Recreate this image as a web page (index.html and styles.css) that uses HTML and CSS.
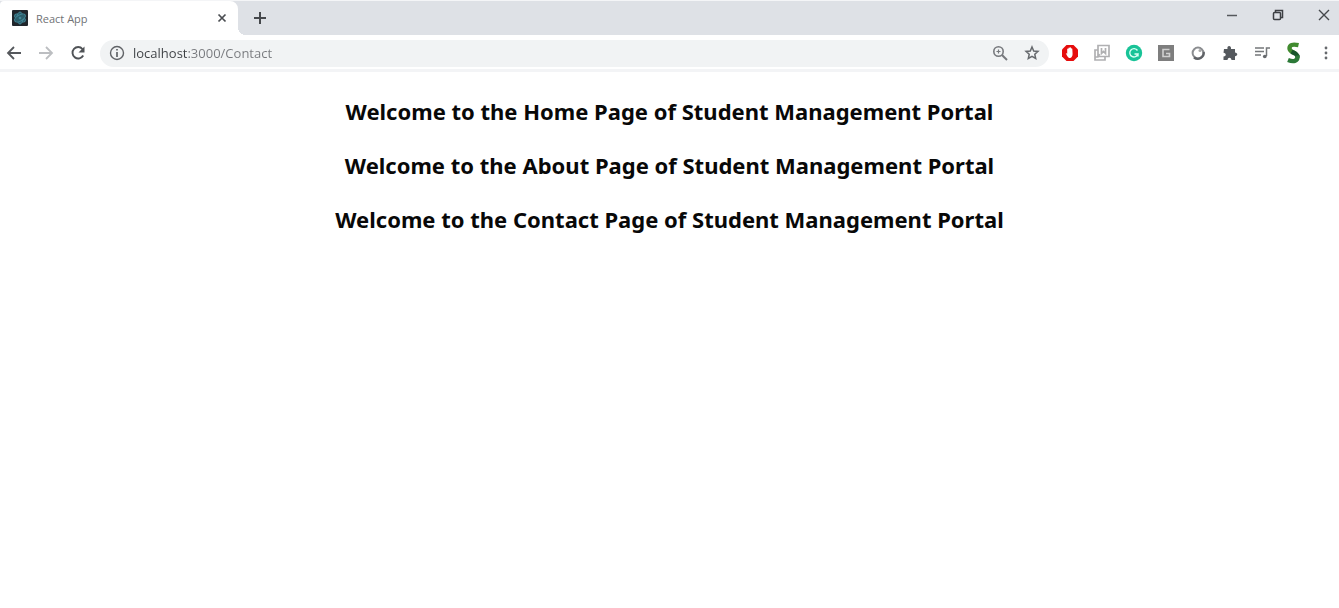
FILE: index.html
```html
<!DOCTYPE html>
<html lang="en">
<head>
<meta charset="utf-8">
<title>React App</title>
<link rel="stylesheet" href="styles.css">
</head>
<body>
<header class="browser">
  <div class="tab-strip">
    <div class="tab">
      <svg class="favicon" width="16" height="16" viewBox="0 0 16 16"><rect width="16" height="16" rx="1" fill="#20262c"/><g fill="#2b5f6c" stroke="#438798" stroke-width="1"><ellipse cx="8" cy="8" rx="6" ry="3" transform="rotate(30 8 8)"/><ellipse cx="8" cy="8" rx="6" ry="3" transform="rotate(90 8 8)"/><ellipse cx="8" cy="8" rx="6" ry="3" transform="rotate(150 8 8)"/></g><circle cx="8" cy="8" r="1.3" fill="#438798"/></svg>
      <span class="tab-title">React App</span>
      <button class="icon-button" aria-label="Close tab"><svg width="16" height="16" viewBox="0 0 16 16" fill="none" stroke="#4a4d51" stroke-width="1.7"><path d="M4.5 4.5l7 7m0-7l-7 7"/></svg></button>
    </div>
    <button class="icon-button new-tab" aria-label="New tab"><svg width="16" height="16" viewBox="0 0 16 16" fill="none" stroke="#45484c" stroke-width="2"><path d="M8 2v12M2 8h12"/></svg></button>
    <div class="window-controls">
      <button class="icon-button" aria-label="Minimize"><svg width="16" height="16" viewBox="0 0 16 16" fill="none" stroke="#55585c" stroke-width="1.5"><path d="M3 8.5h10"/></svg></button>
      <button class="icon-button" aria-label="Restore"><svg width="16" height="16" viewBox="0 0 16 16" fill="none" stroke="#3c3f43" stroke-width="1.5"><rect x="3.5" y="5.5" width="7" height="7" rx="1"/><path d="M5.5 5V3.500h7v7H11"/></svg></button>
      <button class="icon-button" aria-label="Close"><svg width="16" height="16" viewBox="0 0 16 16" fill="none" stroke="#45484c" stroke-width="1.4"><path d="M3 3l10 10m0-10L3 13"/></svg></button>
    </div>
  </div>
  <div class="toolbar">
    <nav class="navigation" aria-label="History">
      <button class="icon-button" aria-label="Back"><svg width="16" height="16" viewBox="0 0 16 16" fill="none" stroke="#55585c" stroke-width="1.8"><path d="M15 8H2M8 2L2 8l6 6"/></svg></button>
      <button class="icon-button" aria-label="Forward" disabled><svg width="16" height="16" viewBox="0 0 16 16" fill="none" stroke="#bcbec1" stroke-width="1.8"><path d="M1 8h13M8 2l6 6-6 6"/></svg></button>
      <button class="icon-button" aria-label="Reload"><svg width="16" height="16" viewBox="0 0 16 16" fill="none" stroke="#505357" stroke-width="1.9"><path d="M13.200 10.500A5.700 5.700 0 1 1 12.500 4"/><path d="M14.500 1.500v6h-6z" fill="#505357" stroke="none"/></svg></button>
    </nav>
    <div class="address-bar">
      <svg width="16" height="16" viewBox="0 0 16 16" fill="none" stroke="#606367" stroke-width="1.4"><circle cx="8" cy="8" r="6.500"/><path d="M8 7v5M8 4v1.600" stroke-width="1.700"/></svg>
      <input class="address" type="text" aria-label="Address" value="localhost:3000/Contact" spellcheck="false">
      <button class="icon-button" aria-label="Zoom"><svg width="16" height="16" viewBox="0 0 16 16" fill="none" stroke="#77797d" stroke-width="1.600"><circle cx="6.500" cy="6.500" r="4.700"/><path d="M10 10l5 5" stroke-width="2"/><path d="M4.500 6.500h4M6.500 4.500v4" stroke-width="1.200"/></svg></button>
      <button class="icon-button" aria-label="Bookmark"><svg width="16" height="16" viewBox="0 0 16 16" fill="none" stroke="#66696d" stroke-width="1.500"><path d="M8 2l1.700 4 4.300.4-3.200 2.900.9 4.200L8 11.300l-3.700 2.200.9-4.200L2 6.400 6.300 6z"/></svg></button>
    </div>
    <div class="extensions">
      <button class="icon-button" aria-label="Ad blocker"><svg width="18" height="18" viewBox="0 0 18 18"><path d="M5.500 1h7L17 5.500v7L12.500 17h-7L1 12.500v-7z" fill="#e60d0d"/><path d="M4.800 9l1.400.8V5q.7-.8 1.200 0V4q.7-.8 1.300 0v-.4q.7-.7 1.300.1v.8q.8-.5 1.300.3l.3 5.200q-.2 3.700-2.700 4H8.200Q6.600 13.600 4.800 9z" fill="#fff"/></svg></button>
      <button class="icon-button" aria-label="Copy capture"><svg width="18" height="18" viewBox="0 0 18 18" fill="none" stroke="#b0b0b2" stroke-width="1.700"><path d="M5 1.500h11v11H5zM5 6H2v10h10v-3M2 13h3l1.500-3M8.500 4v5.500l2-2 2 2V4"/></svg></button>
      <button class="icon-button" aria-label="Writing assistant"><svg width="18" height="18" viewBox="0 0 18 18" fill="none"><circle cx="9" cy="9" r="8.200" fill="#18c397"/><path d="M12.500 6.500A4.200 4.200 0 1 0 13 10H9.500M13 9.500v3" stroke="#d9fff4" stroke-width="1.400"/></svg></button>
      <button class="icon-button" aria-label="G extension"><svg width="18" height="18" viewBox="0 0 18 18" fill="none"><rect x="1" y="1" width="16" height="16" fill="#7e7e7e"/><path d="M12.500 5.500H6v7h6.500V9.500H9" stroke="#d0d0d0" stroke-width="1.600"/></svg></button>
      <button class="icon-button" aria-label="Circle extension"><svg width="18" height="18" viewBox="0 0 18 18" fill="none"><circle cx="9" cy="9" r="5.400" stroke="#8b8d90" stroke-width="2"/><path d="M14.700 8A6 6 0 0 1 5 13.500" stroke="#5f6266" stroke-width="2.300"/><circle cx="11" cy="6.500" r="1.500" fill="#aaa"/></svg></button>
      <button class="icon-button" aria-label="Extensions"><svg width="18" height="18" viewBox="0 0 18 18"><path d="M3 5h3.500C5.500 1 10.700 1 10 5h4v3.500c3 .2 3 3.500 0 3.700V16h-3.500c-.3-3-3.700-3-4 0H2.500v-3.500c3-.2 3-3.500 0-3.800z" fill="#55595e"/></svg></button>
      <button class="icon-button" aria-label="Media controls"><svg width="18" height="18" viewBox="0 0 18 18" fill="none" stroke="#74777a" stroke-width="1.500"><path d="M2 4h9M2 7.500h9M2 11h6M13.500 12V4H17"/><ellipse cx="11.800" cy="12.500" rx="1.900" ry="1.800" fill="#66696d" stroke="none"/></svg></button>
      <button class="icon-button" aria-label="Profile"><svg width="18" height="22" viewBox="0 0 18 22" fill="none" stroke-width="4.400"><path d="M13.500 3.200Q4.500 1.300 4.500 6.200C4.500 9.500 8 9.800 10 11.500" stroke="#418b2f"/><path d="M6.500 9.800C10 11.500 13 12.500 12.500 15.500" stroke="#17552b"/><path d="M12.500 13.500C13 19.800 8 20 3 18" stroke="#2c7938"/></svg></button>
      <button class="icon-button" aria-label="Browser menu"><svg width="18" height="18" viewBox="0 0 18 18" fill="#66696d"><circle cx="9" cy="4" r="1.400"/><circle cx="9" cy="9" r="1.400"/><circle cx="9" cy="14" r="1.400"/></svg></button>
    </div>
  </div>
</header>
<main class="page">
  <h2 class="heading">Welcome to the Home Page of Student Management Portal</h2>
  <h2 class="heading">Welcome to the About Page of Student Management Portal</h2>
  <h2 class="heading">Welcome to the Contact Page of Student Management Portal</h2>
</main>
</body>
</html>
```
FILE: styles.css
```css
* { box-sizing: border-box; }
body { margin: 0; background: #fff; font-family: "Noto Sans", sans-serif; }
svg { display: block; flex: none; }
.browser { border-bottom: 3px solid #f3f4f6; }
.icon-button { display: grid; place-items: center; width: 16px; height: 24px; padding: 0; border: 0; background: none; flex: none; }
.tab-strip { display: flex; align-items: center; height: 35px; border-top: 1px solid #f4f5f7; background: #dee1e6; }
.tab { position: relative; display: flex; align-items: center; align-self: stretch; width: 238px; padding: 0 8px 0 12px; border-radius: 4px 8px 0 0; background: #fff; }
.tab::after { content: ""; position: absolute; left: 100%; bottom: 0; width: 8px; height: 8px; background: radial-gradient(circle at 100% 0, transparent 8px, #fff 8px); }
.tab-title { flex: 1; margin-left: 8px; font-family: "Open Sans", sans-serif; font-size: 11px; color: #707276; }
.new-tab { align-self: stretch; height: auto; width: 44px; }
.window-controls { display: flex; gap: 30px; margin-left: auto; padding: 0 7px 6px 0; }
.toolbar { display: flex; align-items: center; height: 34px; padding: 2px 4px 0 6px; background: #fff; }
.navigation { display: flex; gap: 16px; margin-right: 14px; }
.address-bar { display: flex; align-items: center; flex: 1; gap: 16px; height: 27px; padding: 0 9px; border-radius: 14px; background: #f1f3f4; }
.address { flex: 1; min-width: 0; height: 24px; margin-left: -8px; padding: 0; border: 0; outline: 0; font-family: "Open Sans", sans-serif; font-size: 13px; color: transparent; background: linear-gradient(90deg, #3c3f43 54px, #77797d 54px); -webkit-background-clip: text; background-clip: text; }
.extensions { display: flex; align-items: center; gap: 14px; margin-left: 12px; }
.extensions .icon-button { width: 18px; }
.page { padding: 23px 16px; text-align: center; }
.heading { margin: 0 0 22px; font-size: 22px; line-height: 32px; font-weight: 700; color: #080808; }
```
